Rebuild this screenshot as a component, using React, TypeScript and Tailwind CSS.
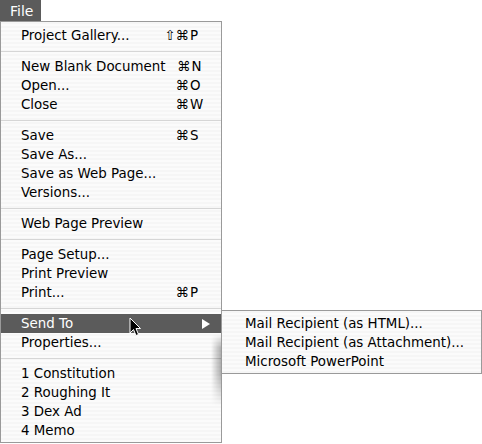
import React from "react";

type Item = {
  label: string;
  mods?: string;
  keyChar?: string;
  active?: boolean;
  arrow?: boolean;
};

const groups: Item[][] = [
  [{ label: "Project Gallery...", mods: "⇧⌘", keyChar: "P" }],
  [
    { label: "New Blank Document", mods: "⌘", keyChar: "N" },
    { label: "Open...", mods: "⌘", keyChar: "O" },
    { label: "Close", mods: "⌘", keyChar: "W" },
  ],
  [
    { label: "Save", mods: "⌘", keyChar: "S" },
    { label: "Save As..." },
    { label: "Save as Web Page..." },
    { label: "Versions..." },
  ],
  [{ label: "Web Page Preview" }],
  [
    { label: "Page Setup..." },
    { label: "Print Preview" },
    { label: "Print...", mods: "⌘", keyChar: "P" },
  ],
  [{ label: "Send To", active: true, arrow: true }, { label: "Properties..." }],
  [
    { label: "1 Constitution" },
    { label: "2 Roughing It" },
    { label: "3 Dex Ad" },
    { label: "4 Memo" },
  ],
];

const submenu = [
  "Mail Recipient (as HTML)...",
  "Mail Recipient (as Attachment)...",
  "Microsoft PowerPoint",
];

const stripes =
  "bg-[repeating-linear-gradient(to_bottom,#f6f6f6_0px,#f6f6f6_2px,#fbfbfb_2px,#fbfbfb_4px)]";

function MenuRow({ item }: { item: Item }) {
  return (
    <div
      className={`flex h-[19px] items-center pl-[20px] ${
        item.active ? "bg-[#5b5b5b] text-white" : "text-black"
      }`}
    >
      <span className="flex-1 whitespace-nowrap">{item.label}</span>
      {item.arrow ? (
        <svg width="8" height="10" viewBox="0 0 8 10" className="mr-[11px]">
          <polygon points="0,0 8,5 0,10" fill="#ffffff" />
        </svg>
      ) : (
        <span className="flex w-[57px] whitespace-nowrap">
          <span className="w-[25px] text-right">{item.mods}</span>
          <span className="pl-[1px]">{item.keyChar}</span>
        </span>
      )}
    </div>
  );
}

function Separator() {
  return (
    <div className="flex h-[12px] items-center">
      <div className="h-px w-full bg-[#d6d6d6]" />
    </div>
  );
}

export default function App() {
  return (
    <div className="relative h-[444px] w-[482px] overflow-hidden bg-white font-['DejaVu_Sans',sans-serif] text-[13.4px] leading-none">
      <div className="flex h-[21px]">
        <div className="flex w-[41px] items-center pl-[10px] text-[14px] text-white bg-[#5b5b5b]">
          File
        </div>
      </div>

      <div
        className={`relative w-[222px] border border-[#9a9a9a] pb-[2px] pt-[4px] ${stripes}`}
      >
        {groups.map((group, gi) => (
          <div key={gi}>
            {gi > 0 && <Separator />}
            {group.map((item) => (
              <MenuRow key={item.label} item={item} />
            ))}
          </div>
        ))}

        {/* shadow cast by the submenu */}
        <div className="pointer-events-none absolute right-0 top-[312px] h-[72px] w-[10px] bg-gradient-to-l from-black/30 to-transparent [mask-image:linear-gradient(to_bottom,transparent,black_20%,black_55%,transparent)]" />
      </div>

      <div
        className={`absolute left-[221px] top-[310px] w-[261px] border border-[#9a9a9a] pb-[2px] pt-[3px] ${stripes}`}
      >
        {submenu.map((label) => (
          <div key={label} className="flex h-[19px] items-center pl-[23px] whitespace-nowrap">
            {label}
          </div>
        ))}
      </div>

      <svg
        className="pointer-events-none absolute left-[129px] top-[317px]"
        width="13"
        height="21"
        viewBox="0 0 13 21"
      >
        <path
          d="M1 1 L1 16 L4.5 12.5 L7 18.5 L9.5 17.5 L7 11.5 L11.5 11.5 Z"
          fill="#000"
          stroke="#fff"
          strokeWidth="1"
          strokeLinejoin="round"
        />
      </svg>
    </div>
  );
}
